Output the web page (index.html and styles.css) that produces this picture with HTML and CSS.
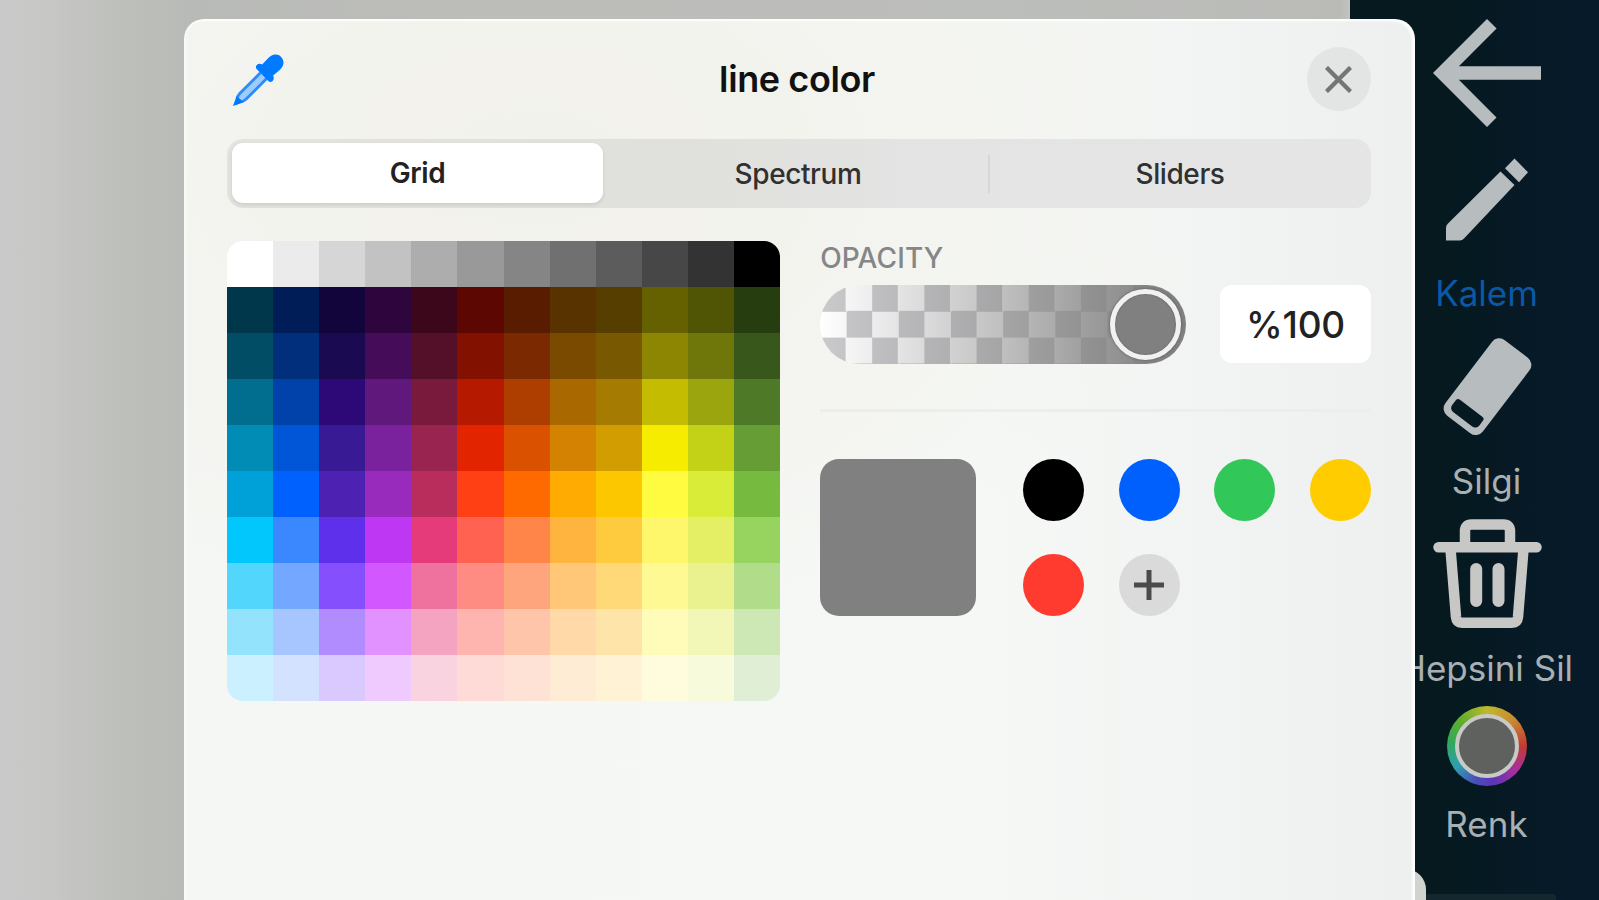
FILE: index.html
```html
<!DOCTYPE html>
<html lang="tr">
<head>
<meta charset="utf-8">
<title>line color</title>
<link rel="stylesheet" href="styles.css">
</head>
<body>
<div class="screen">
  <main class="canvas"></main>
  <nav class="tools">
    <svg class="icon-back" width="108" height="108" viewBox="4 4 16 16"><path d="M20 11H7.83l5.59-5.59L12 4l-8 8 8 8 1.41-1.41L7.83 13H20z"/></svg>
    <svg class="icon-pencil" width="84" height="84" viewBox="0 0 84 84"><path d="M1 71q0-2.500 1.500-4L55.500 14.500 69.500 28 19 81.500q-2 2-4 2H1zM69.500 1.500 83 15.300 74 25.300 60 11.200z"/></svg>
    <span class="tool-label active">Kalem</span>
    <svg class="icon-eraser" width="90" height="100" viewBox="0 0 90 100"><g transform="translate(45.500 49.700) rotate(37.300)"><path fill-rule="evenodd" d="M-14.500-47.500h29a9 9 0 0 1 9 9v77a9 9 0 0 1-9 9h-29a9 9 0 0 1-9-9v-77a9 9 0 0 1 9-9zM-14 27a3 3 0 0 0-3 3v6a5 5 0 0 0 5 5H12a5 5 0 0 0 5-5V30a3 3 0 0 0-3-3z"/></g></svg>
    <span class="tool-label">Silgi</span>
    <svg class="icon-trash" width="114" height="112" viewBox="0 0 114 112"><path d="M8.500 29.300h98M35 28V13q0-6.500 6.500-6.500h32q6.500 0 6.500 6.500v15M20.500 31l5.500 68q.6 5.700 6 5.700h50q5.400 0 6-5.700L93.500 31"/><path class="bars" d="M46.200 51v32M68.500 51v32"/></svg>
    <span class="tool-label">Hepsini Sil</span>
    <div class="color-ring"><div class="color-dot"></div></div>
    <span class="tool-label">Renk</span>
    <div class="dock"></div>
  </nav>
  <div class="corner-knob"></div>

  <section class="dialog">
    <header class="dialog-head">
      <svg class="icon-dropper" width="52" height="52" viewBox="0 0 54 54"><path class="glass" d="M29.500 19.500 8 41q-2.500 2.500-3 7l-1.500 3.500L7.500 50q4.500-.5 7-3L36 25.500"/><path d="M5 43.500 2 52q-.3 1.500 1.200 1.100L12 50z"/><path d="M36.500 5.500C41-.5 47.500-.7 51 3c3.800 4 3.300 10-2.300 14.500l-6 4.700q1.700 3.600-.7 6-2 1.500-4 0L25.500 15.600q-1.500-2 0-4 2.400-2.400 5.800-.8z"/></svg>
      <h1 class="title">line color</h1>
      <button class="close"><svg width="27" height="27" viewBox="0 0 28 28"><path d="M1.500 1.500l25 25M26.500 1.500l-25 25"/></svg></button>
    </header>
    <div class="segments">
      <div class="segment selected">Grid</div>
      <div class="segment">Spectrum</div>
      <div class="segment last">Sliders</div>
    </div>
    <div class="dialog-body">
      <div class="palette" id="palette"></div>
      <div class="controls">
        <div class="caption">OPACITY</div>
        <div class="opacity-row">
          <div class="slider"><div class="knob"></div></div>
          <div class="value">%100</div>
        </div>
        <div class="rule"></div>
        <div class="swatches">
          <div class="current"></div>
          <div class="dots">
            <div class="dot black"></div>
            <div class="dot blue"></div>
            <div class="dot green"></div>
            <div class="dot yellow"></div>
            <div class="dot red"></div>
            <div class="dot add"><svg width="30" height="30" viewBox="0 0 30 30"><path d="M15 0v30M0 15h30"/></svg></div>
          </div>
        </div>
      </div>
    </div>
  </section>
</div>
<script src="palette.js"></script>
</body>
</html>
```
FILE: styles.css
```css
* { box-sizing: border-box; }
body { margin: 0; font-family: Inter, "Liberation Sans", sans-serif; }
.screen { position: relative; display: flex; width: 1599px; height: 900px; overflow: hidden; }
.canvas {
  flex: 1;
  background: linear-gradient(90deg, #c9c9c9 0, #c7c7c6 50px, #bfc1bd 105px, #babcb8 165px, #b8bab7 185px, #bcbdb9 420px, #bcbebb 1000px, #babbb7 1340px, #c2c4c2 1350px);
}
.tools {
  width: 249px;
  padding: 19px 0 0 24px;
  display: flex;
  flex-direction: column;
  align-items: center;
  background: linear-gradient(90deg, #05191e 0, #05191f 90px, #071a28 200px, #071a2a 100%);
}
.tools svg { flex: none; fill: #b7bcbf; }
.icon-pencil { margin-top: 30px; }
.icon-eraser { margin-top: 23px; }
.icon-trash { margin-top: 17px; }
.tools .icon-trash { fill: none; stroke: #c7c7c6; stroke-width: 10.5; stroke-linecap: round; }
.icon-trash .bars { stroke-width: 12; }
.tool-label {
  margin-top: 18px;
  line-height: 40px;
  font-size: 35px;
  font-weight: 400;
  letter-spacing: 0;
  color: #a9b0b3;
  white-space: nowrap;
}
.tool-label.active { margin-top: 32px; margin-bottom: 1px; color: #0b58a6; }
.icon-eraser + .tool-label { margin-top: 24px; }
.color-ring {
  flex: none;
  display: grid;
  place-items: center;
  width: 80px;
  height: 80px;
  margin-top: 18px;
  border-radius: 50%;
  background: conic-gradient(#bdb92a, #c98a32 45deg, #c23a34 90deg, #a52fa0 132deg, #5b35b5 170deg, #4a50ba 200deg, #2e9fb0 235deg, #30a95c 275deg, #5fae2c 315deg, #bdb92a);
}
.color-dot { width: 64px; height: 64px; border: 4px solid #c9c9c6; border-radius: 50%; background: #5f615e; }
.dock { flex: none; width: 138px; height: 20px; margin-top: 50px; border-radius: 3px 3px 0 0; background: #14262e; }
.corner-knob { position: absolute; left: 1385px; top: 869px; width: 41px; height: 60px; border-radius: 24px; background: #d0d3ce; }

.dialog {
  position: absolute;
  left: 184px;
  top: 19px;
  width: 1231px;
  height: 900px;
  padding: 0 44px 0 43px;
  border-radius: 20px;
  background: radial-gradient(ellipse 680px 460px at 350px 150px, #f2f1eb 0, #f3f3ee 40%, rgba(244, 247, 245, 0) 100%), linear-gradient(90deg, #f5f7f4 0, #f5f8f5 65%, #eef0f0 100%);
  box-shadow: inset -3px 2px 2px #fdfefd, inset 2px 0 3px #fafbfa;
}
.dialog-head { display: flex; align-items: center; justify-content: space-between; height: 120px; }
.icon-dropper { margin: 2px 0 0 5px; fill: #007aff; }
.icon-dropper .glass { fill: #9fcbfb; stroke: #2b8dfb; stroke-width: 3; }
.title { margin: 0 0 0 3px; font-size: 36px; font-weight: 600; letter-spacing: -0.4px; color: #111; }
.close { display: grid; place-items: center; width: 64px; height: 64px; padding: 0; border: 0; border-radius: 50%; background: #e3e4e4; }
.close svg { fill: none; stroke: #747576; stroke-width: 4.5; }
.segments {
  display: grid;
  grid-template-columns: 380px 382px 382px;
  height: 69px;
  border-radius: 16px;
  background: linear-gradient(90deg, #e3e3df 0, #e0e0dc 40%, #e3e4e3 60%, #e4e5e4 100%);
}
.segment { position: relative; display: flex; align-items: center; justify-content: center; font-size: 28px; font-weight: 500; letter-spacing: -0.4px; color: #303030; }
.segment.selected { width: 371px; height: 60px; margin: 4px 5px; border-radius: 11px; background: #fff; font-weight: 600; color: #222; box-shadow: 0 2px 4px rgba(0, 0, 0, .1); }
.segment.last::before { content: ""; position: absolute; left: -1px; top: 16px; width: 2px; height: 38px; background: #d6d8d7; }

.dialog-body { display: flex; gap: 40px; margin-top: 33px; }
.palette { display: grid; grid-template-columns: repeat(12, 46.1px); grid-auto-rows: 46px; border-radius: 16px; overflow: hidden; }
.controls { flex: 1; }
.caption { line-height: 34px; font-size: 28px; font-weight: 500; letter-spacing: 0.1px; color: #858686; }
.opacity-row { display: flex; justify-content: space-between; margin-top: 10px; }
.slider {
  width: 366px;
  height: 79px;
  padding: 4px 5px;
  display: flex;
  justify-content: flex-end;
  border-radius: 40px;
  background: linear-gradient(90deg, rgba(128, 128, 128, 0) 0, rgba(128, 128, 128, .5) 50%, rgba(128, 128, 128, .82) 78%, #808080 95%), repeating-conic-gradient(#fff 0 25%, #cacacd 0 50%) 0 0 / 52.200px 52.600px;
}
.knob { width: 71px; height: 71px; border: 5px solid #f1f1f1; border-radius: 50%; background: #808080; box-shadow: 0 0 3px rgba(0, 0, 0, .35), inset 0 0 2px rgba(0, 0, 0, .3); }
.value { display: grid; place-items: center; width: 151px; height: 78px; border-radius: 12px; background: #fff; font-size: 37px; font-weight: 500; letter-spacing: -0.2px; color: #222; }
.rule { height: 3px; margin-top: 45px; background: #ebeeec; }
.swatches { display: flex; gap: 47px; margin-top: 47px; }
.current { width: 156px; height: 157px; border-radius: 19px; background: #808080; }
.dots { display: grid; grid-template-columns: repeat(4, 61px); grid-auto-rows: 62px; column-gap: 34.500px; row-gap: 33px; }
.dot { border-radius: 50%; }
.black { background: #000; }
.blue { background: #0060fe; }
.green { background: #32c759; }
.yellow { background: #fc0; }
.red { background: #ff3b30; }
.add { display: grid; place-items: center; background: #dadada; }
.add svg { fill: none; stroke: #4b4b4b; stroke-width: 5; }
```
FILE: palette.js
```js
const rows = [
  "ffffff ebebeb d6d6d6 c2c2c2 adadad 999999 858585 707070 5c5c5c 474747 333333 000000",
  "00374a 011d57 11053b 2e063d 3c071b 5c0701 5a1c00 583300 563d00 666100 4f5504 263e0f",
  "004d65 012f7b 1a0a52 450d59 551029 831100 7b2900 7a4a00 785800 8d8602 6f760a 38571a",
  "016e8f 0042a9 2c0977 61187c 791a3d b51a00 ad3e00 a96800 a67b01 c4bc00 9ba50e 4e7a27",
  "008cb4 0056d6 371a94 7a219e 99244f e22400 da5100 d38301 d19d01 f5ec00 c3d117 669d34",
  "00a1d8 0061fe 4d22b2 982abc b92d5d ff4015 ff6a00 ffab01 fdc700 fefb41 d9ec37 76bb40",
  "01c7fc 3a87fe 5e30eb be38f3 e63b7a ff6250 ff8648 feb43f fecb3e fff76b e4ef65 96d35f",
  "52d6fc 74a7ff 864ffe d357fe ee719e ff8c82 ffa57d ffc777 ffd977 fff994 eaf28f b1dd8b",
  "93e3fd a7c6ff b18cfe e292fe f4a4c0 ffb5af ffc5ab ffd9a8 fee4a8 fffbb9 f2f7b7 cde8b5",
  "cbf0ff d3e2ff d9c9fe efcaff f9d3e0 ffdbd8 ffe2d6 ffecd4 fff2d5 fefcdd f7fadb dfeed4"
];
const palette = document.getElementById("palette");
for (const row of rows) {
  for (const hex of row.split(" ")) {
    const cell = document.createElement("div");
    cell.style.background = "#" + hex;
    palette.append(cell);
  }
}
```
